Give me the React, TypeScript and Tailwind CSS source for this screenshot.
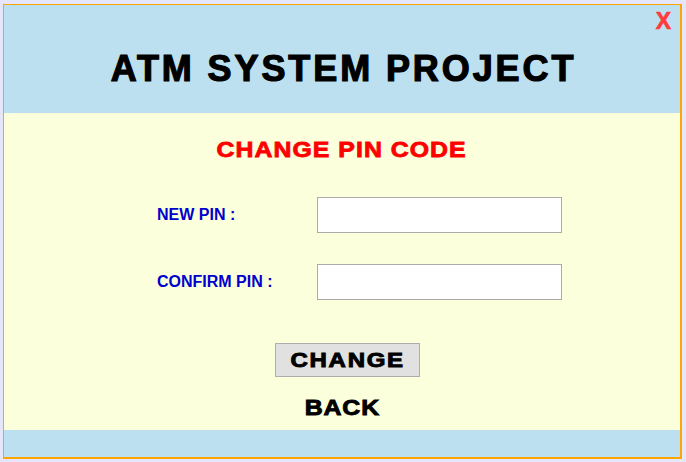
import React from "react";

export default function App() {
  return (
    <div
      className="w-[686px] h-[462px] bg-[#e6e6fa] pt-[4px] pl-[3px]"
      style={{ fontFamily: '"Liberation Sans", Arial, sans-serif' }}
    >
      <div className="relative w-[679px] h-[455px] border-t border-l border-r-2 border-b-2 border-[#ffa500] flex flex-col">
        <div className="h-[108px] bg-[#bde0f0] flex justify-center pt-[46px]">
          <h1 className="text-[36px] leading-[36px] font-bold text-black tracking-[2.9px] pl-[3px] [-webkit-text-stroke:1.2px_#000]">
            ATM SYSTEM PROJECT
          </h1>
        </div>
        <button className="absolute top-[5px] right-[9px] text-[23px] leading-[23px] font-bold text-[#ff3b3b] [-webkit-text-stroke:0.6px_#ff3b3b]">
          X
        </button>

        <div className="h-[317px] bg-[#fcffdc] flex flex-col items-center pt-[26px]">
          <div className="h-[22px] flex justify-center">
            <span className="inline-block text-[22px] leading-[22px] font-bold text-[#ff0000] tracking-[0.9px] scale-x-[1.13] [-webkit-text-stroke:0.8px_#ff0000]">
              CHANGE PIN CODE
            </span>
          </div>

          <div className="w-full flex flex-col mt-[36px] gap-[31px]">
            <div className="flex items-center pl-[153px]">
              <label className="w-[160px] text-[16px] leading-[16px] font-bold text-[#0000cd]">
                NEW PIN :
              </label>
              <input
                type="password"
                className="w-[245px] h-[36px] bg-white border border-[#ababab] outline-none"
              />
            </div>
            <div className="flex items-center pl-[153px]">
              <label className="w-[160px] text-[16px] leading-[16px] font-bold text-[#0000cd]">
                CONFIRM PIN :
              </label>
              <input
                type="password"
                className="w-[245px] h-[36px] bg-white border border-[#ababab] outline-none"
              />
            </div>
          </div>

          <button className="mt-[43px] ml-[11px] w-[145px] h-[34px] bg-[#e1e1e1] border border-[#adadad] flex items-center justify-center">
            <span className="inline-block text-[20px] leading-[20px] font-bold text-black tracking-[1.4px] scale-x-[1.2] pl-[1px] [-webkit-text-stroke:0.9px_#000]">
              CHANGE
            </span>
          </button>

          <div className="mt-[20px] h-[22px] flex justify-center">
            <span className="inline-block text-[22px] leading-[22px] font-bold text-black tracking-[0.8px] scale-x-[1.13] [-webkit-text-stroke:0.9px_#000]">
              BACK
            </span>
          </div>
        </div>

        <div className="h-[27px] bg-[#bde0f0]" />
      </div>
    </div>
  );
}
